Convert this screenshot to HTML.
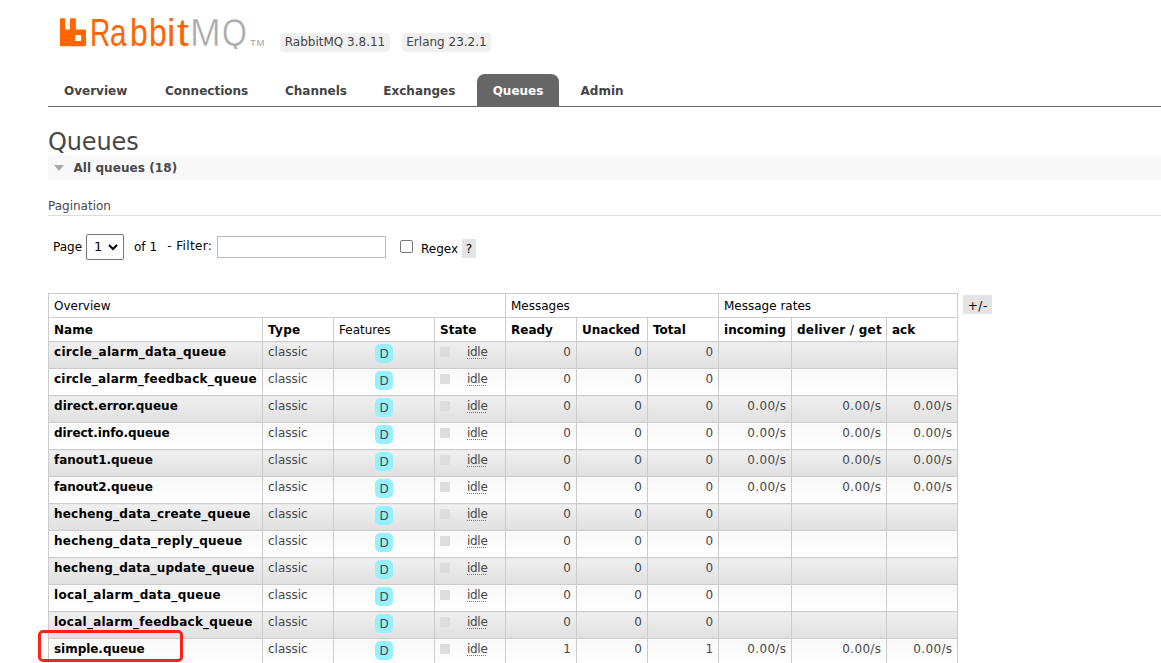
<!DOCTYPE html>
<html>
<head>
<meta charset="utf-8">
<title>RabbitMQ Management</title>
<style>
html,body{margin:0;padding:0;background:#fff;}
body{font:12px "DejaVu Sans","Liberation Sans",sans-serif;color:#484848;width:1161px;height:663px;overflow:hidden;position:relative;}
.abs{position:absolute;white-space:nowrap;}
#logo-icon{left:60px;top:18px;}
#logo-text{left:0;top:8px;width:300px;height:50px;font-family:"Liberation Sans","DejaVu Sans",sans-serif;font-size:38px;line-height:50px;color:#f60;}
#logo-text span{position:absolute;top:0;transform-origin:0 0;}
#logo-text .mq{color:#a9a9a9;-webkit-text-stroke:0.45px #fff;}
#tm{left:250px;top:38px;font-family:"Liberation Sans",sans-serif;font-size:9.5px;line-height:10px;color:#a4a4a4;letter-spacing:0.7px;}
.ver{background:#f0f0f0;border-radius:4px;height:19px;line-height:19px;top:33px;color:#444;font-size:12px;text-align:center;}
#menu{left:48px;top:74px;width:1113px;height:32px;border-bottom:1px solid #666;}
#menu a{position:absolute;top:0;height:32px;line-height:34px;font-weight:bold;color:#444;font-size:12px;}
#menu a.sel{background:#666;color:#fff;border-radius:8px 8px 0 0;text-align:center;}
h1{position:absolute;left:48px;top:127px;margin:0;font-size:24px;line-height:30px;font-weight:normal;color:#484848;letter-spacing:-0.12px;}
#sec{left:48px;top:155px;width:1113px;height:25px;background:#f8f8f8;}
#sec b{position:absolute;left:25.4px;top:1px;line-height:25px;color:#484848;letter-spacing:0.08px;}
#sec i{position:absolute;left:6px;top:10px;width:0;height:0;border-left:5.5px solid transparent;border-right:5.5px solid transparent;border-top:6px solid #aaa;}
#pag{left:48px;top:198px;width:1113px;height:17px;border-bottom:1px solid #ddd;color:#484848;line-height:16px;}
.blk{color:#000;}
table.list{position:absolute;left:48px;top:293px;border-collapse:collapse;table-layout:fixed;width:910px;}
table.list th,table.list td{border:1px solid #ccc;padding:0 5px;text-align:left;vertical-align:top;overflow:hidden;white-space:nowrap;}
table.list th{height:21px;line-height:21px;padding-top:2px;font-weight:bold;color:#000;background:#fff;}
table.list th.n{font-weight:normal;}
table.list td{height:26px;line-height:20px;color:#484848;}
table.list tr.a1 td{background:linear-gradient(#f0f0f0,#e0e0e0);}
table.list tr.a2 td{background:linear-gradient(#f8f8f8,#fff);}
table.list td.nm{font-weight:bold;color:#000;}
table.list td.r{text-align:right;}
table.list td.c{text-align:center;}
table.list td.rt{letter-spacing:0.33px;padding-right:4.7px;}
.d{display:inline-block;background:#98f0ff;border-radius:5px;width:18px;height:19px;line-height:20px;margin-top:2px;color:#484848;text-align:center;}
.sq{display:inline-block;width:10px;height:10px;background:#ddd;margin:5px 17px 0 0;vertical-align:top;}
.idle{text-decoration:underline dotted #777;text-decoration-thickness:1px;text-underline-offset:2px;letter-spacing:-0.3px;}
#pm{left:963px;top:295px;width:29px;height:19px;line-height:22px;background:#e4e4e4;text-align:center;color:#000;letter-spacing:0.5px;text-indent:0.5px;}
#red{left:38px;top:630px;width:139px;height:25.5px;border:3px solid #f8231a;border-radius:5px;}
</style>
</head>
<body>
<svg id="logo-icon" class="abs" width="26" height="29" viewBox="0 0 26 29"><path fill="#f60" d="M1 .2H4.2a1 1 0 0 1 1 1V11.6H9.9V1.2a1 1 0 0 1 1-1H14.9a1 1 0 0 1 1 1V11.6H25a1 1 0 0 1 1 1V27.2a1 1 0 0 1-1 1H1a1 1 0 0 1-1-1V1.2a1 1 0 0 1 1-1z"/><rect x="15.2" y="17" width="6" height="6" rx="1" fill="#fff"/></svg>
<div id="logo-text" class="abs"><span style="left:90.2px;transform:scaleX(0.74)">R</span><span style="left:109.9px;transform:scaleX(0.78)">a</span><span style="left:129.6px;transform:scaleX(0.84)">b</span><span style="left:148.6px;transform:scaleX(0.84)">b</span><span style="left:167.0px;transform:scaleX(1.0)">i</span><span style="left:177.0px;transform:scaleX(1.12)">t</span><span class="mq" style="left:190.2px;transform:scaleX(0.97)">M</span><span class="mq" style="left:221.9px;transform:scaleX(0.84);clip-path:inset(0 0 9px 0)">Q</span></div>
<div id="tm" class="abs">TM</div>
<div class="abs ver" style="left:280px;width:110px;">RabbitMQ 3.8.11</div>
<div class="abs ver" style="left:402px;width:89px;">Erlang 23.2.1</div>

<div id="menu" class="abs">
<a style="left:16px;">Overview</a>
<a style="left:117px;">Connections</a>
<a style="left:237px;">Channels</a>
<a style="left:335.3px;">Exchanges</a>
<a class="sel" style="left:429px;width:82px;">Queues</a>
<a style="left:532.5px;">Admin</a>
</div>

<h1>Queues</h1>
<div id="sec" class="abs"><i></i><b>All queues (18)</b></div>
<div id="pag" class="abs">Pagination</div>

<div class="abs blk" style="left:53px;top:239px;line-height:16px;">Page</div>
<div class="abs" style="left:86px;top:234px;width:36px;height:24px;border:1px solid #767676;border-radius:2px;background:#fff;box-sizing:content-box;"><span class="abs blk" style="left:7px;top:4px;font-size:13px;line-height:16px;">1</span><svg class="abs" style="left:21px;top:9px;" width="10" height="7" viewBox="0 0 10 7"><path d="M1 1l4 4 4-4" fill="none" stroke="#000" stroke-width="2"/></svg></div>
<div class="abs blk" style="left:134px;top:239px;line-height:16px;">of 1</div>
<div class="abs blk" style="left:167.3px;top:238px;line-height:16px;letter-spacing:0.35px;">- Filter:</div>
<div class="abs" style="left:217px;top:236px;width:167px;height:20px;border:1px solid #bbb;background:#fff;"></div>
<div class="abs" style="left:400px;top:240px;width:11px;height:11px;border:1px solid #767676;border-radius:2px;background:#fff;"></div>
<div class="abs blk" style="left:421px;top:241px;line-height:16px;">Regex</div>
<div class="abs blk" style="left:462px;top:239px;width:14px;height:19px;line-height:21px;background:#e4e4e4;text-align:center;">?</div>

<table class="list">
<colgroup><col style="width:214px"><col style="width:71px"><col style="width:101px"><col style="width:71px"><col style="width:71px"><col style="width:71px"><col style="width:71px"><col style="width:73px"><col style="width:95px"><col style="width:71px"></colgroup>
<tr><th class="n" colspan="4">Overview</th><th class="n" colspan="3">Messages</th><th class="n" colspan="3">Message rates</th></tr>
<tr><th>Name</th><th style="letter-spacing:0.3px">Type</th><th class="n">Features</th><th>State</th><th>Ready</th><th>Unacked</th><th>Total</th><th>incoming</th><th style="letter-spacing:0.22px">deliver / get</th><th>ack</th></tr>
<tr class="a1"><td class="nm" style="letter-spacing:0.287px">circle_alarm_data_queue</td><td>classic</td><td class="c"><span class="d">D</span></td><td><span class="sq"></span><span class="idle">idle</span></td><td class="r">0</td><td class="r">0</td><td class="r">0</td><td class="r"></td><td class="r"></td><td class="r"></td></tr>
<tr class="a2"><td class="nm" style="letter-spacing:0.219px">circle_alarm_feedback_queue</td><td>classic</td><td class="c"><span class="d">D</span></td><td><span class="sq"></span><span class="idle">idle</span></td><td class="r">0</td><td class="r">0</td><td class="r">0</td><td class="r"></td><td class="r"></td><td class="r"></td></tr>
<tr class="a1"><td class="nm" style="letter-spacing:0.040px">direct.error.queue</td><td>classic</td><td class="c"><span class="d">D</span></td><td><span class="sq"></span><span class="idle">idle</span></td><td class="r">0</td><td class="r">0</td><td class="r">0</td><td class="r rt">0.00/s</td><td class="r rt">0.00/s</td><td class="r rt">0.00/s</td></tr>
<tr class="a2"><td class="nm" style="letter-spacing:-0.076px">direct.info.queue</td><td>classic</td><td class="c"><span class="d">D</span></td><td><span class="sq"></span><span class="idle">idle</span></td><td class="r">0</td><td class="r">0</td><td class="r">0</td><td class="r rt">0.00/s</td><td class="r rt">0.00/s</td><td class="r rt">0.00/s</td></tr>
<tr class="a1"><td class="nm" style="letter-spacing:-0.040px">fanout1.queue</td><td>classic</td><td class="c"><span class="d">D</span></td><td><span class="sq"></span><span class="idle">idle</span></td><td class="r">0</td><td class="r">0</td><td class="r">0</td><td class="r rt">0.00/s</td><td class="r rt">0.00/s</td><td class="r rt">0.00/s</td></tr>
<tr class="a2"><td class="nm" style="letter-spacing:-0.040px">fanout2.queue</td><td>classic</td><td class="c"><span class="d">D</span></td><td><span class="sq"></span><span class="idle">idle</span></td><td class="r">0</td><td class="r">0</td><td class="r">0</td><td class="r rt">0.00/s</td><td class="r rt">0.00/s</td><td class="r rt">0.00/s</td></tr>
<tr class="a1"><td class="nm" style="letter-spacing:0.216px">hecheng_data_create_queue</td><td>classic</td><td class="c"><span class="d">D</span></td><td><span class="sq"></span><span class="idle">idle</span></td><td class="r">0</td><td class="r">0</td><td class="r">0</td><td class="r"></td><td class="r"></td><td class="r"></td></tr>
<tr class="a2"><td class="nm" style="letter-spacing:0.237px">hecheng_data_reply_queue</td><td>classic</td><td class="c"><span class="d">D</span></td><td><span class="sq"></span><span class="idle">idle</span></td><td class="r">0</td><td class="r">0</td><td class="r">0</td><td class="r"></td><td class="r"></td><td class="r"></td></tr>
<tr class="a1"><td class="nm" style="letter-spacing:0.196px">hecheng_data_update_queue</td><td>classic</td><td class="c"><span class="d">D</span></td><td><span class="sq"></span><span class="idle">idle</span></td><td class="r">0</td><td class="r">0</td><td class="r">0</td><td class="r"></td><td class="r"></td><td class="r"></td></tr>
<tr class="a2"><td class="nm" style="letter-spacing:0.277px">local_alarm_data_queue</td><td>classic</td><td class="c"><span class="d">D</span></td><td><span class="sq"></span><span class="idle">idle</span></td><td class="r">0</td><td class="r">0</td><td class="r">0</td><td class="r"></td><td class="r"></td><td class="r"></td></tr>
<tr class="a1"><td class="nm" style="letter-spacing:0.242px">local_alarm_feedback_queue</td><td>classic</td><td class="c"><span class="d">D</span></td><td><span class="sq"></span><span class="idle">idle</span></td><td class="r">0</td><td class="r">0</td><td class="r">0</td><td class="r"></td><td class="r"></td><td class="r"></td></tr>
<tr class="a2"><td class="nm" style="letter-spacing:-0.040px">simple.queue</td><td>classic</td><td class="c"><span class="d">D</span></td><td><span class="sq"></span><span class="idle">idle</span></td><td class="r">1</td><td class="r">0</td><td class="r">1</td><td class="r rt">0.00/s</td><td class="r rt">0.00/s</td><td class="r rt">0.00/s</td></tr>
</table>
<div id="pm" class="abs">+/-</div>
<div id="red" class="abs"></div>
</body>
</html>
